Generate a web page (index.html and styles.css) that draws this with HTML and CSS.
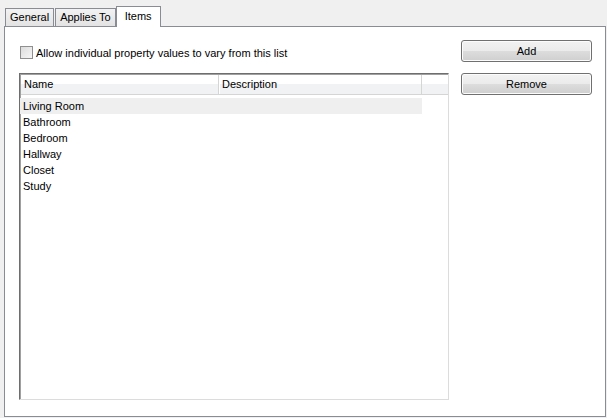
FILE: index.html
```html
<!DOCTYPE html>
<html>
<head>
<meta charset="utf-8">
<link rel="stylesheet" href="styles.css">
</head>
<body>
<div class="tabs">
  <div class="tab">General</div>
  <div class="tab">Applies To</div>
  <div class="tab active">Items</div>
</div>
<div class="panel">
  <div class="left">
    <label class="check"><span class="box"></span><span>Allow individual property values to vary from this list</span></label>
    <div class="list">
      <div class="header">
        <div class="col name">Name</div>
        <div class="col desc">Description</div>
        <div class="col fill"></div>
      </div>
      <div class="rows">
        <div class="row sel">Living Room</div>
        <div class="row">Bathroom</div>
        <div class="row">Bedroom</div>
        <div class="row">Hallway</div>
        <div class="row">Closet</div>
        <div class="row">Study</div>
      </div>
    </div>
  </div>
  <div class="right">
    <button class="btn">Add</button>
    <button class="btn">Remove</button>
  </div>
</div>
</body>
</html>
```
FILE: styles.css
```css
html, body {
  margin: 0;
  padding: 0;
  background: #f0f0f0;
  font-family: "Liberation Sans", Arial, sans-serif;
  font-size: 11px;
  color: #000;
}
.tabs {
  display: flex;
  align-items: flex-end;
  height: 26px;
  padding-left: 5px;
  position: relative;
  z-index: 1;
}
.tab {
  height: 17px;
  line-height: 17px;
  padding: 0 4px;
  border: 1px solid #898c95;
  border-bottom: none;
  background: linear-gradient(#f2f2f2, #e3e3e3);
  margin-right: 1px;
  box-sizing: content-box;
}
.tab.active {
  height: 20px;
  line-height: 18px;
  padding: 0 8px;
  background: #fff;
  margin-bottom: -1px;
  margin-left: -1px;
}
.panel {
  margin-left: 4px;
  width: 600px;
  height: 389px;
  background: #fff;
  border: 1px solid #898c95;
  display: flex;
}
.left {
  padding-left: 14px;
  padding-top: 19px;
  width: 430px;
}
.check {
  display: flex;
  align-items: center;
  height: 13px;
  margin-left: 1px;
  gap: 3px;
}
.box {
  width: 11px;
  height: 11px;
  border: 1px solid #8f8f8f;
  background: linear-gradient(135deg, #dcdcdc, #f6f6f6);
}
.list {
  margin-top: 14px;
  width: 428px;
  height: 325px;
  border-top: 1px solid #6e6e6e;
  border-left: 1px solid #6e6e6e;
  border-right: 1px solid #dcdcdc;
  border-bottom: 1px solid #dcdcdc;
  box-shadow: inset 1px 1px 0 #a0a0a0;
}
.header {
  display: flex;
  height: 19px;
  border-bottom: 1px solid #d5d5d5;
  background: linear-gradient(#ffffff 0, #ffffff 45%, #f1f2f4 50%, #f1f2f4 100%);
  margin-left: 1px;
  margin-top: 1px;
}
.col {
  line-height: 19px;
  padding-left: 3px;
  box-sizing: border-box;
}
.name { width: 198px; border-right: 1px solid #d5d5d5; }
.desc { width: 203px; border-right: 1px solid #d5d5d5; box-shadow: inset 1px 0 0 #fff; }
.fill { flex: 1; }
.rows {
  padding-top: 3px;
}
.row {
  width: 399px;
  height: 16px;
  line-height: 16px;
  padding-left: 3px;
}
.row.sel { background: #efefef; }
.right {
  padding-top: 13px;
  margin-left: 12px;
  display: flex;
  flex-direction: column;
  gap: 11px;
}
.btn {
  width: 131px;
  height: 22px;
  border: 1px solid #707070;
  border-radius: 3px;
  background: linear-gradient(#f2f2f2 0, #ebebeb 50%, #dddddd 50%, #cfcfcf 100%);
  font-family: "Liberation Sans", Arial, sans-serif;
  font-size: 11px;
  color: #000;
  padding: 0;
  box-shadow: inset 0 0 0 1px #fcfcfc;
}
```
